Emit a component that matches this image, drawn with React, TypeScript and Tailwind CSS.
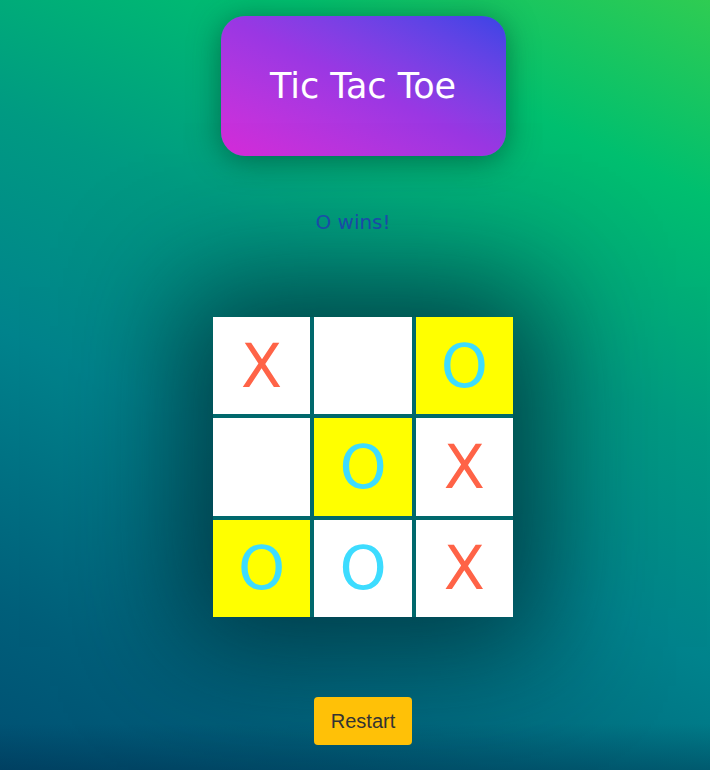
import React, { useState } from "react";

type Cell = "X" | "O" | null;

const initial: Cell[] = ["X", null, "O", null, "O", "X", "O", "O", "X"];
const winLine = [2, 4, 6];

export default function App() {
  const [board, setBoard] = useState<Cell[]>(initial);

  const restart = () => setBoard(Array(9).fill(null));

  return (
    <div
      className="min-h-screen pl-4 flex flex-col items-center bg-[linear-gradient(to_bottom,transparent_94%,rgba(0,30,60,0.3)),linear-gradient(205deg,#2fcc52_0%,#00bf6f_18%,#009a82_40%,#00838c_60%,#005f7a_85%,#004f72_100%)]"
      style={{ fontFamily: '"DejaVu Sans", sans-serif' }}
    >
      {/* Header */}
      <div className="mt-4 w-[285px] h-[140px] rounded-[24px] flex items-center justify-center bg-gradient-to-tr from-[#d62ad9] via-[#9a37e3] to-[#3944e6] shadow-[0_4px_30px_rgba(0,60,40,0.55)]">
        <h1 className="text-[35px] text-white">Tic Tac Toe</h1>
      </div>

      {/* Status */}
      <div className="mt-[52px] mr-5 h-7 leading-7 text-[20px] text-[#1e4fb5]">
        O wins!
      </div>

      {/* Board */}
      <div className="mt-[81px] w-[300px] grid grid-cols-3 gap-1 bg-[#00686c] shadow-[0_0_110px_30px_rgba(0,30,40,0.7)]">
        {board.map((c, i) => (
          <button
            key={i}
            onClick={() => {
              if (c) return;
              const next = board.slice();
              next[i] = "X";
              setBoard(next);
            }}
            className={`aspect-square flex items-center justify-center text-[60px] leading-none ${
              winLine.includes(i) && c ? "bg-[#ffff00]" : "bg-white"
            } ${c === "X" ? "text-[#ff6347]" : "text-[#3ddcff]"}`}
          >
            {c}
          </button>
        ))}
      </div>

      {/* Restart */}
      <button
        onClick={restart}
        className="mt-20 w-[98px] h-12 rounded bg-[#ffc107] text-[#333] text-[20px]"
        style={{ fontFamily: '"Liberation Sans", Arial, sans-serif' }}
      >
        Restart
      </button>
    </div>
  );
}
